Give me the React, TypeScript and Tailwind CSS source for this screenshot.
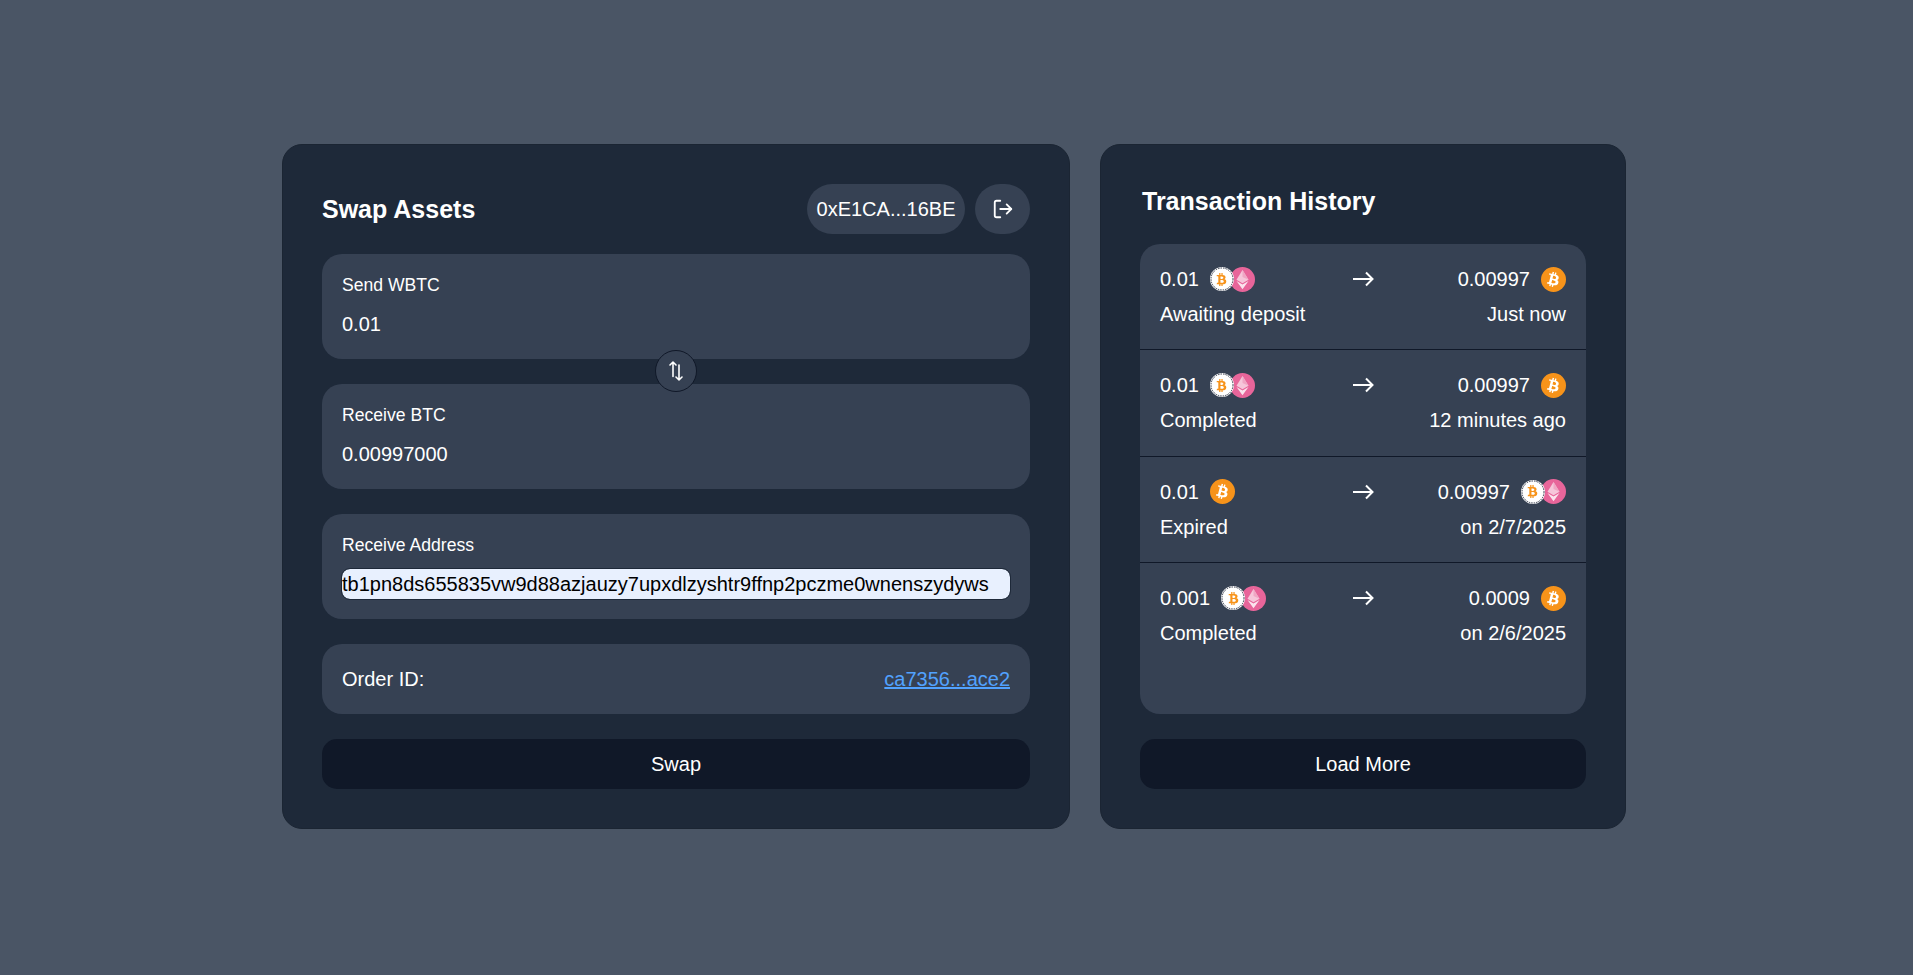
import React from "react";
import { LogOut } from "lucide-react";
import { FaBtc } from "react-icons/fa";

type Coin = "wbtc" | "btc";

type Tx = {
  sendAmount: string;
  sendCoin: Coin;
  receiveAmount: string;
  receiveCoin: Coin;
  status: string;
  time: string;
};

const txs: Tx[] = [
  { sendAmount: "0.01", sendCoin: "wbtc", receiveAmount: "0.00997", receiveCoin: "btc", status: "Awaiting deposit", time: "Just now" },
  { sendAmount: "0.01", sendCoin: "wbtc", receiveAmount: "0.00997", receiveCoin: "btc", status: "Completed", time: "12 minutes ago" },
  { sendAmount: "0.01", sendCoin: "btc", receiveAmount: "0.00997", receiveCoin: "wbtc", status: "Expired", time: "on 2/7/2025" },
  { sendAmount: "0.001", sendCoin: "wbtc", receiveAmount: "0.0009", receiveCoin: "btc", status: "Completed", time: "on 2/6/2025" },
];

const BtcIcon = () => (
  <span className="flex h-[25px] w-[25px] items-center justify-center rounded-full bg-[#f7931a]">
    <FaBtc className="h-[15px] w-[15px] rotate-[14deg] text-white" />
  </span>
);

// white bitcoin coin + pink ethereum coin, overlapped
const WbtcIcon = () => (
  <span className="flex items-center">
    <span className="relative flex h-[24px] w-[24px] items-center justify-center rounded-full bg-white">
      <svg className="absolute inset-0" width="24" height="24" viewBox="0 0 24 24" fill="none">
        <circle cx="12" cy="12" r="11" stroke="#2f3547" strokeWidth="1" strokeDasharray="1.5 1" />
      </svg>
      <FaBtc className="h-[13px] w-[13px] text-[#f7931a]" />
    </span>
    <svg className="-ml-[4px]" width="25" height="25" viewBox="0 0 25 25">
      <circle cx="12.5" cy="12.5" r="12.5" fill="#e8659a" />
      <polygon points="12.5,3 18.5,12.7 12.5,16.2 6.5,12.7" fill="#f6c6da" />
      <polygon points="12.5,3 18.5,12.7 12.5,10" fill="#f0a6c4" />
      <polygon points="12.5,17.6 18.5,14.1 12.5,22.3 6.5,14.1" fill="#fbe3ed" />
    </svg>
  </span>
);

const CoinIcon = ({ coin }: { coin: Coin }) => (coin === "btc" ? <BtcIcon /> : <WbtcIcon />);

const Field = ({ label, value, autofill }: { label: string; value: string; autofill?: boolean }) => (
  <div className="rounded-[20px] bg-gray-700 p-5">
    <label className="mb-[15px] block h-5 text-[17.6px] leading-[23px] text-white">{label}</label>
    <input
      readOnly
      value={value}
      className={
        autofill
          ? "block h-[30px] w-full rounded-[8px] bg-[#e8f0fe] text-[20px] text-black outline outline-1 outline-[#1e2939]"
          : "block h-[30px] w-full bg-transparent text-[20px] text-white outline-none"
      }
    />
  </div>
);

const ActionButton = ({ children }: { children: React.ReactNode }) => (
  <button className="h-[50px] w-full rounded-[15px] bg-gray-900 text-[20px] text-white">{children}</button>
);

const App: React.FC = () => {
  return (
    <div className="flex min-h-screen items-start gap-[30px] bg-gray-600 pl-[282px] pt-[144px] font-['Liberation_Sans',Arial,sans-serif]">
      {/* SWAP CARD */}
      <div className="w-[788px] rounded-[20px] border border-[#1b2533] bg-gray-800 p-[39px]">
        <div className="mb-5 flex h-[50px] items-center justify-between">
          <h2 className="pt-[2px] text-[25px] font-bold text-white">Swap Assets</h2>
          <div className="flex gap-[10px]">
            <div className="flex h-[50px] w-[158px] items-center justify-center rounded-[25px] bg-gray-700 text-[20px] text-white">
              0xE1CA...16BE
            </div>
            <button className="flex h-[50px] w-[55px] items-center justify-center rounded-[25px] bg-gray-700 text-white">
              <LogOut size={22} />
            </button>
          </div>
        </div>

        <div className="relative">
          <Field label="Send WBTC" value="0.01" />
          <button className="absolute left-1/2 top-[96px] z-10 flex h-[42px] w-[42px] -translate-x-1/2 items-center justify-center rounded-full border border-gray-900 bg-gray-700 text-white">
            <svg width="14" height="20" viewBox="0 0 14 20" fill="none" stroke="currentColor" strokeWidth="1.6" strokeLinecap="round" strokeLinejoin="round">
              <path d="M4 15.5V1M1 4 4 1 7 4" />
              <path d="M10 4v15M7 16l3 3 3-3" />
            </svg>
          </button>
          <div className="mt-[25px]">
            <Field label="Receive BTC" value="0.00997000" />
          </div>
        </div>

        <div className="mt-[25px]">
          <Field label="Receive Address" value="tb1pn8ds655835vw9d88azjauzy7upxdlzyshtr9ffnp2pczme0wnenszydyws" autofill />
        </div>

        <div className="mt-[25px] flex h-[70px] items-center justify-between rounded-[20px] bg-gray-700 px-5 text-[20px] text-white">
          <span>Order ID:</span>
          <a href="#order" className="text-blue-400 underline">ca7356...ace2</a>
        </div>

        <div className="mt-[25px]">
          <ActionButton>Swap</ActionButton>
        </div>
      </div>

      {/* HISTORY CARD */}
      <div className="w-[526px] rounded-[20px] border border-[#1b2533] bg-gray-800 p-[39px]">
        <h2 className="mb-5 h-[40px] pl-[2px] text-[25px] font-bold leading-[34px] text-white">Transaction History</h2>

        <div className="h-[470px] overflow-hidden rounded-[20px] bg-gray-700">
          {txs.map((tx, i) => (
            <div key={i} className={i < 3 ? "h-[106.4px] border-b border-gray-900 p-5" : "h-[106.4px] p-5"}>
              <div className="grid h-[30px] grid-cols-3 items-center text-[20px] text-white">
                <div className="flex items-center gap-[11px]">
                  <span>{tx.sendAmount}</span>
                  <CoinIcon coin={tx.sendCoin} />
                </div>
                <div className="flex justify-center">
                  <svg width="22" height="16" viewBox="0 0 22 16" fill="none" stroke="currentColor" strokeWidth="2">
                    <path d="M1 8h19M14 1.5 20.5 8 14 14.5" />
                  </svg>
                </div>
                <div className="flex items-center justify-end gap-[11px]">
                  <span>{tx.receiveAmount}</span>
                  <CoinIcon coin={tx.receiveCoin} />
                </div>
              </div>
              <div className="mt-[9px] flex justify-between text-[20px] leading-[22px] text-white">
                <span>{tx.status}</span>
                <span>{tx.time}</span>
              </div>
            </div>
          ))}
        </div>

        <div className="mt-[25px]">
          <ActionButton>Load More</ActionButton>
        </div>
      </div>
    </div>
  );
};

export default App;
